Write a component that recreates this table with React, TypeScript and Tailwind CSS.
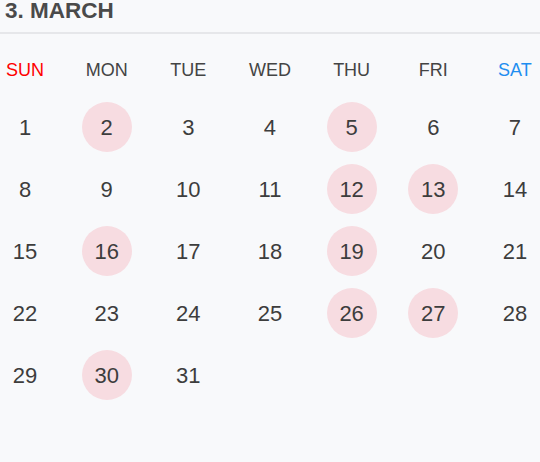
const days = ['SUN', 'MON', 'TUE', 'WED', 'THU', 'FRI', 'SAT'];
const marked = [2, 5, 12, 13, 16, 19, 26, 27, 30];

const weeks: (number | null)[][] = [];
for (let w = 0; w < 5; w++) {
  const row: (number | null)[] = [];
  for (let d = 0; d < 7; d++) {
    const n = w * 7 + d + 1;
    row.push(n <= 31 ? n : null);
  }
  weeks.push(row);
}

export default function App() {
  return (
    <main className="h-[462px] w-[540px] overflow-hidden bg-[#f8f9fb] font-['Liberation_Sans',Arial,sans-serif] text-[#3d3d3d]">
      <div className="h-[34px] border-b-2 border-[#e6e7ea] pl-[5px]">
        <h1 className="text-[22.5px] font-bold leading-none text-[#4a4a4a]">3. MARCH</h1>
      </div>

      <div className="mt-[23px] flex justify-between">
        {days.map((d, i) => (
          <div
            key={d}
            className={
              'w-[50px] text-center text-[18px] leading-[26px] ' +
              (i === 0 ? 'text-[#ff0000]' : i === 6 ? 'text-[#1e8ef0]' : 'text-[#444]')
            }
          >
            {d}
          </div>
        ))}
      </div>

      <div className="mt-[19px] flex flex-col gap-[12px]">
        {weeks.map((row, wi) => (
          <div key={wi} className="flex justify-between">
            {row.map((n, di) => (
              <div
                key={di}
                className={
                  'flex h-[50px] w-[50px] items-center justify-center rounded-full text-[22px] ' +
                  (n && marked.includes(n) ? 'bg-[#f7dce1]' : '')
                }
              >
                {n}
              </div>
            ))}
          </div>
        ))}
      </div>
    </main>
  );
}
